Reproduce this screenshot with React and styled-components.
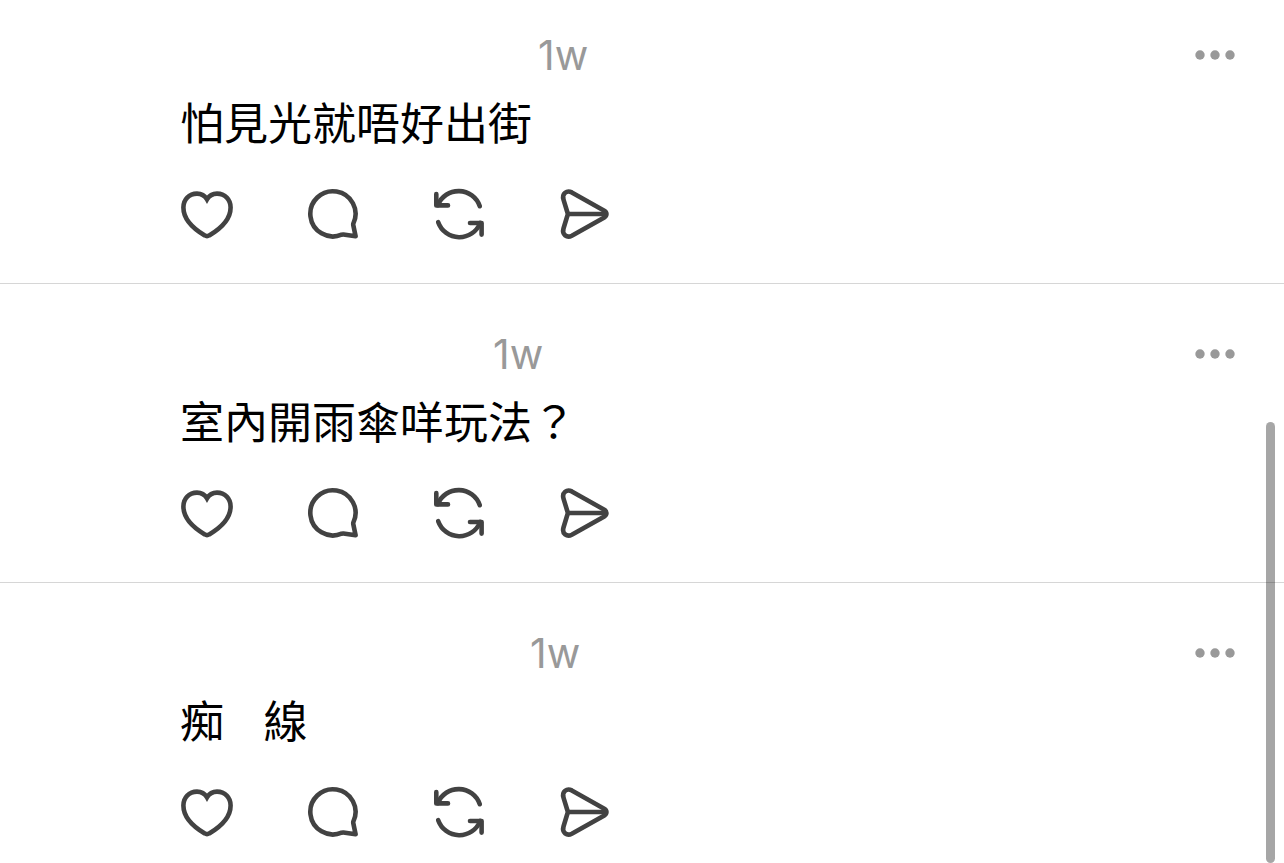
import React from 'react';
import styled, { createGlobalStyle } from 'styled-components';

const colors = {
    text: '#000',
    muted: '#999',
    icon: '#424242',
    line: '#d6d6d6'
};

const posts = [
    { id: 1, nameWidth: 358, time: '1w', text: '怕見光就唔好出街' },
    { id: 2, nameWidth: 313, time: '1w', text: '室內開雨傘咩玩法？' },
    { id: 3, nameWidth: 350, time: '1w', text: '痴    線' }
];

const GlobalStyle = createGlobalStyle`
    * {
        box-sizing: border-box;
    }

    body {
        margin: 0;
        background: #fff;
        color: ${colors.text};
    }
`;

const Feed = styled.main`
    height: 100vh;
    overflow: hidden;
`;

const StyledPost = styled.article`
    display: flex;
    flex-direction: column;
    padding: 44px 48px 42px 180px;
    border-bottom: 1px solid ${colors.line};

    &:first-child {
        padding-top: 29px;
    }
`;

const Header = styled.header`
    display: flex;
    align-items: center;
    height: 52px;
`;

const Name = styled.span`
    flex: none;
    width: ${props => props.$width}px;
`;

const Time = styled.time`
    flex: 1;
    font-family: Inter, 'Liberation Sans', sans-serif;
    font-size: 41px;
    line-height: 52px;
    color: ${colors.muted};
`;

const Text = styled.p`
    margin: 10px 0 36px;
    font-family: 'Noto Sans CJK TC', sans-serif;
    font-size: 44px;
    line-height: 60px;
    white-space: pre-wrap;
`;

const Actions = styled.div`
    display: flex;
    gap: 72px;
`;

const IconButton = styled.button`
    display: flex;
    padding: 0;
    border: 0;
    background: none;
    color: ${props => (props.$muted ? colors.muted : colors.icon)};
    cursor: pointer;

    svg {
        display: block;
        fill: none;
        stroke: currentColor;
        stroke-width: 4.6;
    }
`;

const ScrollThumb = styled.div`
    position: fixed;
    top: 422px;
    right: 9px;
    bottom: 0;
    width: 9px;
    border-radius: 5px;
    background: rgba(0, 0, 0, 0.35);
`;

const HeartIcon = () => (
    <svg width="54" height="54" viewBox="0 0 54 54">
        <path d="M27 12.4C24.8 8.6 21.4 6.6 17 6.6C9 6.6 3.4 12.6 3.4 20.4C3.4 32 14 42 24.8 48.4Q27 49.8 29.2 48.4C40 42 50.6 32 50.6 20.4C50.6 12.6 45 6.6 37 6.6C32.6 6.6 29.2 8.6 27 12.4Z" />
    </svg>
);

const ReplyIcon = () => (
    <svg width="54" height="54" viewBox="0 0 54 54" strokeLinejoin="round">
        <path d="M35.6 47.7A22.6 22.6 0 1 1 47.4 36.4Q47.1 37.2 47.3 38.2L49.6 49.3L37.4 47.5Q36.5 47.4 35.6 47.7Z" />
    </svg>
);

const RepostIcon = () => (
    <svg
        width="54"
        height="54"
        viewBox="0 0 54 54"
        strokeLinecap="round"
        strokeLinejoin="round"
    >
        <path d="M47.8 19.2A22.4 22.4 0 0 0 5.8 18.2" />
        <path d="M4.3 7V18.4H16" />
        <path d="M6.2 35.2A22.4 22.4 0 0 0 48.2 36" />
        <path d="M49.6 47.6V36H38" />
    </svg>
);

const ShareIcon = () => (
    <svg width="54" height="54" viewBox="0 0 54 54" strokeLinejoin="round">
        <path d="M9.9 27L5.5 12.6C3.7 6.4 8.9 2.8 13.8 5.4L46.3 23.7C49.2 25.4 49.2 28.7 46.3 30.4L13.8 48.7C8.9 51.3 3.7 47.6 5.5 41.5Z" />
        <path d="M9.9 27H48" />
    </svg>
);

const MoreIcon = () => (
    <svg width="42" height="12" viewBox="0 0 42 12">
        {[6, 21, 36].map(x => (
            <circle key={x} cx={x} cy="6" r="4.7" fill={colors.muted} stroke="none" />
        ))}
    </svg>
);

const actions = [
    { label: 'Like', Icon: HeartIcon },
    { label: 'Reply', Icon: ReplyIcon },
    { label: 'Repost', Icon: RepostIcon },
    { label: 'Share', Icon: ShareIcon }
];

const Post = ({ nameWidth, time, text }) => {
    return (
        <StyledPost>
            <Header>
                <Name $width={nameWidth} />
                <Time>{time}</Time>
                <IconButton $muted aria-label="More">
                    <MoreIcon />
                </IconButton>
            </Header>
            <Text lang="zh-HK">{text}</Text>
            <Actions>
                {actions.map(({ label, Icon }) => (
                    <IconButton key={label} aria-label={label}>
                        <Icon />
                    </IconButton>
                ))}
            </Actions>
        </StyledPost>
    );
};

const App = () => {
    return (
        <>
            <GlobalStyle />
            <Feed>
                {posts.map(post => (
                    <Post key={post.id} {...post} />
                ))}
            </Feed>
            <ScrollThumb />
        </>
    );
};

export default App;
